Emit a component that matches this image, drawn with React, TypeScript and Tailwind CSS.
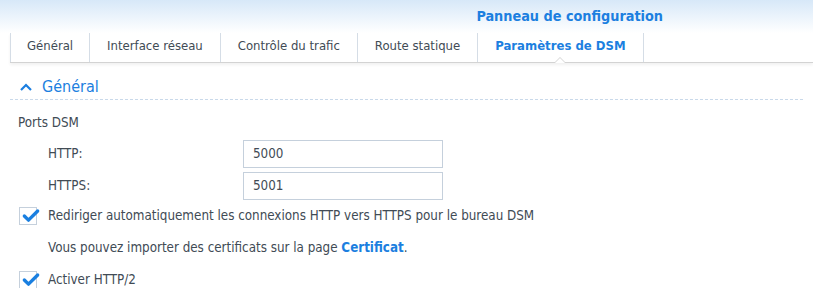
import { Check } from "lucide-react";

const tabs = ["Général", "Interface réseau", "Contrôle du trafic", "Route statique", "Paramètres de DSM"];

function Checkbox() {
  return (
    <span className="relative flex h-[18px] w-[18px] shrink-0 items-center justify-center border border-[#c5d0dc] bg-white">
      <Check className="absolute -top-[2px] left-[1px] h-[20px] w-[20px] text-[#1a7fe0]" strokeWidth={4} />
    </span>
  );
}

export default function App() {
  return (
    <div className="h-[288px] w-[813px] overflow-hidden bg-white text-[13px] text-[#414b55] [font-family:'DejaVu_Sans_Condensed',sans-serif]">
      <div className="bg-gradient-to-b from-[#d7e8f8] to-white">
        <div className="flex h-[33px] items-center justify-end pr-[150px] pt-[1px]">
          <span className="text-[14.3px] font-bold text-[#1c7fe0]">Panneau de configuration</span>
        </div>
      </div>
      <div className="ml-[10px] flex h-[30px] border-b border-[#d3d3d3] shadow-[0_2px_3px_rgba(0,0,0,0.06)]">
        {tabs.map((t, i) => {
          const active = i === tabs.length - 1;
          return (
            <div key={t} className="relative flex items-center border-l border-[#d5dde6] last:border-r px-[17px] pb-[3px] first:px-[16px]">
              <span className={active ? "font-bold text-[#1c7fe0]" : ""}>{t}</span>
              {active && (
                <span className="absolute -bottom-[1px] left-1/2 h-0 w-0 -translate-x-1/2 border-x-[6px] border-b-[6px] border-x-transparent border-b-[#d3d3d3]">
                  <span className="absolute left-[-5px] top-[1px] h-0 w-0 border-x-[5px] border-b-[5px] border-x-transparent border-b-white" />
                </span>
              )}
            </div>
          );
        })}
      </div>
      <div className="mx-[10px] mt-[12px] flex h-[25px] items-center gap-[10px] border-b border-dashed border-[#c9d9ea] pb-[1px] pl-[10px]">
        <svg width="12" height="8" viewBox="0 0 12 8" className="mt-[1px]">
          <polyline points="1,7 6,2 11,7" fill="none" stroke="#1c7fe0" strokeWidth="2.2" />
        </svg>
        <span className="text-[16px] text-[#1c7fe0]">Général</span>
      </div>
      <div className="pl-[18px] pt-[13px] text-[13.3px]">
        <div>Ports DSM</div>
        <div className="mt-[7px] flex flex-col gap-[4px] pl-[30px]">
          <div className="flex items-center">
            <span className="w-[195px]">HTTP:</span>
            <input readOnly value="5000" className="h-[28px] w-[200px] border border-[#c5d0dc] px-[9px] text-[#414b55] outline-none" />
          </div>
          <div className="flex items-center">
            <span className="w-[195px]">HTTPS:</span>
            <input readOnly value="5001" className="h-[28px] w-[200px] border border-[#c5d0dc] px-[9px] text-[#414b55] outline-none" />
          </div>
        </div>
        <div className="mt-[6px] flex items-center gap-[11px] pl-[1px]">
          <Checkbox />
          <span>Rediriger automatiquement les connexions HTTP vers HTTPS pour le bureau DSM</span>
        </div>
        <div className="mt-[12px] pl-[30px]">
          Vous pouvez importer des certificats sur la page <span className="font-bold text-[#1c7fe0]">Certificat</span>.
        </div>
        <div className="mt-[12px] flex items-center gap-[11px] pl-[1px]">
          <Checkbox />
          <span>Activer HTTP/2</span>
        </div>
      </div>
    </div>
  );
}
